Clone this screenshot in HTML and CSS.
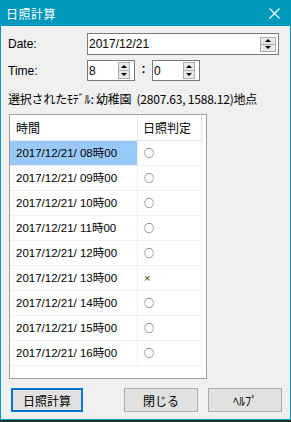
FILE: index.html
```html
<!DOCTYPE html>
<html lang="ja">
<head>
    <meta charset="UTF-8">
    <title>日照計算</title>
    <link rel="stylesheet" href="styles.css">
</head>
<body>
    <div class="window">
        <div class="titlebar">
            <span class="title">日照計算</span>
            <svg class="close" width="11" height="11" viewBox="0 0 11 11">
                <path d="M0.5 0.5 L10.5 10.5 M10.5 0.5 L0.5 10.5" stroke="#fff" stroke-width="1.1" fill="none"/>
            </svg>
        </div>

        <div class="content">
            <div class="field">
                <span class="label">Date:</span>
                <div class="input input-date">
                    <span class="value">2017/12/21</span>
                    <div class="spin">
                        <span class="spin-btn"><i class="up"></i></span>
                        <span class="spin-btn"><i class="down"></i></span>
                    </div>
                </div>
            </div>

            <div class="field field-time">
                <span class="label">Time:</span>
                <div class="input input-time">
                    <span class="value">8</span>
                    <div class="spin spin-small">
                        <span class="spin-btn"><i class="up"></i></span>
                        <span class="spin-btn"><i class="down"></i></span>
                    </div>
                </div>
                <span class="colon">:</span>
                <div class="input input-time">
                    <span class="value">0</span>
                    <div class="spin spin-small">
                        <span class="spin-btn"><i class="up"></i></span>
                        <span class="spin-btn"><i class="down"></i></span>
                    </div>
                </div>
            </div>

            <p class="model">選択されたﾓﾃﾞﾙ: 幼稚園 &nbsp;(2807.63, 1588.12)地点</p>

            <div class="list">
                <div class="list-row list-head">
                    <span class="cell">時間</span>
                    <span class="cell">日照判定</span>
                </div>
                <div class="list-row">
                    <span class="cell selected">2017/12/21/ 08時00</span>
                    <span class="cell mark">○</span>
                </div>
                <div class="list-row">
                    <span class="cell">2017/12/21/ 09時00</span>
                    <span class="cell mark">○</span>
                </div>
                <div class="list-row">
                    <span class="cell">2017/12/21/ 10時00</span>
                    <span class="cell mark">○</span>
                </div>
                <div class="list-row">
                    <span class="cell">2017/12/21/ 11時00</span>
                    <span class="cell mark">○</span>
                </div>
                <div class="list-row">
                    <span class="cell">2017/12/21/ 12時00</span>
                    <span class="cell mark">○</span>
                </div>
                <div class="list-row">
                    <span class="cell">2017/12/21/ 13時00</span>
                    <span class="cell mark cross">×</span>
                </div>
                <div class="list-row">
                    <span class="cell">2017/12/21/ 14時00</span>
                    <span class="cell mark">○</span>
                </div>
                <div class="list-row">
                    <span class="cell">2017/12/21/ 15時00</span>
                    <span class="cell mark">○</span>
                </div>
                <div class="list-row">
                    <span class="cell">2017/12/21/ 16時00</span>
                    <span class="cell mark">○</span>
                </div>
            </div>

            <div class="buttons">
                <button class="btn btn-default">日照計算</button>
                <button class="btn btn-close">閉じる</button>
                <button class="btn">ﾍﾙﾌﾟ</button>
            </div>
        </div>
    </div>
</body>
</html>
```

FILE: styles.css
```css
body {
    margin: 0;
    padding: 0;
    background-color: #1d3330;
    font-family: "Liberation Sans", "Noto Sans CJK JP", sans-serif;
    font-size: 12px;
    color: #000000;
}

.window {
    width: 291px;
    height: 420px;
    box-sizing: border-box;
    border: 1px solid #0099bc;
    border-top: none;
    background-color: #f0f0f0;
    display: flex;
    flex-direction: column;
}

.titlebar {
    height: 26px;
    flex: none;
    background-color: #0099bc;
    color: #ffffff;
    display: flex;
    align-items: center;
    justify-content: space-between;
    padding: 0 10px 0 5px;
}

.title {
    font-family: "Noto Sans CJK JP", sans-serif;
    font-size: 12px;
    letter-spacing: 0.5px;
}

.close {
    display: block;
}

.content {
    padding: 7px 8px 0 7px;
}

/* 入力欄 */
.field {
    display: flex;
    align-items: center;
    height: 22px;
}

.field-time {
    margin-top: 5px;
    height: 21px;
}

.label {
    width: 79px;
    flex: none;
}

.input {
    height: 100%;
    box-sizing: border-box;
    border: 1px solid #7a7a7a;
    background-color: #ffffff;
    display: flex;
    align-items: center;
    justify-content: space-between;
    padding: 0 2px 0 1px;
}

.input-date {
    width: 192px;
}

.input-time {
    width: 48px;
    padding-right: 4px;
}

.colon {
    width: 17px;
    text-align: center;
    font-weight: bold;
    margin-top: -4px;
}

.spin {
    display: flex;
    flex-direction: column;
}

.spin-btn {
    width: 14px;
    height: 6px;
    border: 1px solid #adadad;
    background-color: #e8e8e8;
    display: flex;
    align-items: center;
    justify-content: center;
}

.spin-btn + .spin-btn {
    margin-top: -1px;
}

.spin-small .spin-btn {
    width: 10px;
    height: 7px;
}

.up,
.down {
    width: 0;
    height: 0;
    border-left: 3px solid transparent;
    border-right: 3px solid transparent;
}

.up {
    border-bottom: 3px solid #000000;
}

.down {
    border-top: 3px solid #000000;
}

.model {
    margin: 11px 0 0;
    line-height: 14px;
    font-family: "Noto Sans CJK JP", sans-serif;
    font-size: 12px;
    white-space: nowrap;
    letter-spacing: -0.2px;
}

/* 一覧 */
.list {
    margin: 8px 0 0 1px;
    width: 198px;
    height: 265px;
    box-sizing: border-box;
    border: 1px solid #a0a0a0;
    background-color: #ffffff;
}

.list-row {
    display: grid;
    grid-template-columns: 128px 64px;
}

.cell {
    height: 24px;
    line-height: 24px;
    border-right: 1px solid #f0f0f0;
    border-bottom: 1px solid #f0f0f0;
    padding-left: 6px;
    white-space: nowrap;
    font-size: 11.5px;
}

.list-head .cell {
    height: 25px;
    line-height: 26px;
    border-color: #e5e5e5;
    font-family: "Noto Sans CJK JP", sans-serif;
    font-size: 12px;
}

.list-head .cell + .cell {
    padding-left: 5px;
}

.selected {
    background-color: #99c9f8;
}

.mark {
    padding-left: 6px;
    font-family: "Noto Sans CJK JP", sans-serif;
    font-size: 10px;
    color: #2a2a3a;
}

.cross {
    font-family: "Liberation Sans", sans-serif;
    font-size: 11px;
    color: #5a3010;
}

/* ボタン */
.buttons {
    display: flex;
    gap: 10px;
    margin-top: 9px;
    padding-left: 3px;
}

.btn {
    width: 74px;
    height: 24px;
    box-sizing: border-box;
    border: 1px solid #adadad;
    background-color: #e1e1e1;
    font-family: "Noto Sans CJK JP", sans-serif;
    font-size: 12px;
    color: #000000;
    padding: 0;
}

.btn-default {
    width: 72px;
    border: 2px solid #0078d7;
}

.btn-close {
    margin-left: auto;
}
```
